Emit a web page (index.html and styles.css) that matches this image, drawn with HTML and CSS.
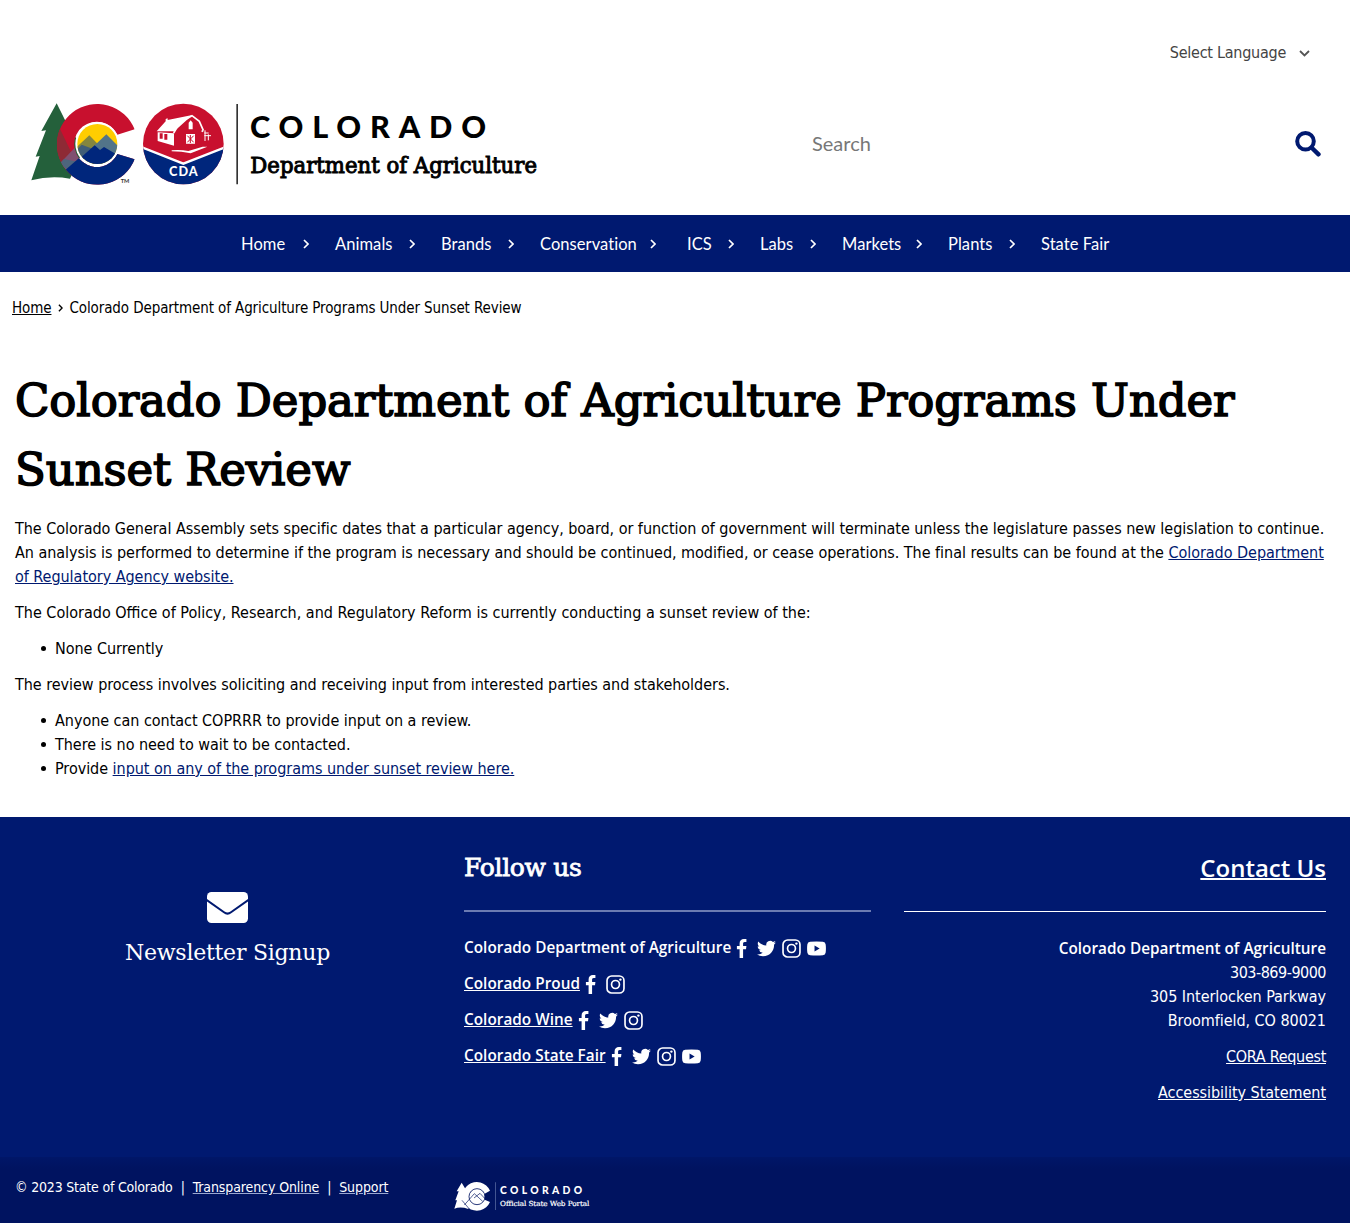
FILE: index.html
```html
<!DOCTYPE html>
<html lang="en">
<head>
<meta charset="utf-8">
<title>Colorado Department of Agriculture Programs Under Sunset Review</title>
<link rel="stylesheet" href="styles.css">
</head>
<body>
<svg class="defs" aria-hidden="true">
  <symbol id="fb" viewBox="0 0 24 24"><path d="M14 24V13h3.700l.5-4.300H14V6c0-1.200.4-2.100 2.100-2.100h2.100V.1C17.900.1 16.600 0 15 0c-3.200 0-5.400 2-5.400 5.600v3.100H6.200V13h3.400v11z"/></symbol>
  <symbol id="tw" viewBox="0 0 24 24"><path d="M23.950 4.570a10 10 0 0 1-2.820.770 4.960 4.960 0 0 0 2.160-2.720c-.950.550-2 .950-3.130 1.180a4.920 4.920 0 0 0-8.380 4.480C7.690 8.100 4.070 6.130 1.640 3.160a4.820 4.820 0 0 0-.670 2.480c0 1.710.87 3.210 2.190 4.100a4.900 4.900 0 0 1-2.230-.620v.060a4.920 4.920 0 0 0 3.950 4.830 5 5 0 0 1-2.210.080 4.940 4.940 0 0 0 4.600 3.420A9.870 9.870 0 0 1 0 19.540a13.990 13.990 0 0 0 7.550 2.210c9.050 0 14-7.500 14-13.980 0-.210 0-.420-.020-.630a9.940 9.940 0 0 0 2.420-2.570z"/></symbol>
  <symbol id="ig" viewBox="0 0 24 24"><rect x="1.300" y="1.300" width="21.400" height="21.400" rx="5.800" fill="none" stroke="#fff" stroke-width="2.100"/><circle cx="12" cy="12" r="5" fill="none" stroke="#fff" stroke-width="2.100"/><circle cx="18.200" cy="5.800" r="1.500"/></symbol>
  <symbol id="yt" viewBox="0 0 24 24"><path fill-rule="evenodd" d="M4 3.500Q12 3 20 3.500Q23.200 3.700 23.600 7Q24.200 12 23.600 17Q23.200 20.300 20 20.500Q12 21 4 20.500Q.8 20.300.4 17Q-.2 12 .4 7Q.8 3.700 4 3.500zM9.500 8.300v7.400L16 12z"/></symbol>
  <symbol id="chev" viewBox="0 0 6 10"><path d="M1 1l4 4-4 4" fill="none" stroke="currentColor" stroke-width="1.700"/></symbol>
</svg>

<header class="header">
  <div class="language">Select Language
    <svg width="11" height="7" viewBox="0 0 11 7"><path d="M1 1l4.500 4.500L10 1" fill="none" stroke="#555" stroke-width="1.800"/></svg>
  </div>
  <div class="masthead">
    <svg class="logo" width="530" height="105" viewBox="0 0 1590 315" role="img">
      <defs>
        <clipPath id="cshape"><path d="M344 118A121 121 0 1 0 344 208L292 192A68 68 0 1 1 292 134z"/></clipPath>
        <clipPath id="disc"><circle cx="232" cy="162" r="60"/></clipPath>
        <clipPath id="seal"><circle cx="490" cy="162" r="121"/></clipPath>
      </defs>
      <path fill="#24603b" d="M110 40L64 123L78 121L47 200L59 198L34 271Q92 255 150 266L190 180L135 90z"/>
      <g clip-path="url(#cshape)">
        <path fill="#c8102e" d="M100 30h260v260H100z"/>
        <path fill="#8e2a35" d="M90 40L112 100L160 200L100 240z"/>
        <path fill="#805070" d="M118 222L172 165L240 235L150 250z"/>
        <path fill="#4d657d" d="M118 222L132 207L175 216L142 238z"/>
        <path fill="#00267c" d="M136 240L222 165L350 180V300H190z"/>
      </g>
      <circle cx="232" cy="162" r="66" fill="#fff"/>
      <g clip-path="url(#disc)">
        <path fill="#ffcd00" d="M165 95h140v140H165z"/>
        <path fill="#84863f" d="M160 180L208 136L260 190V240H160z"/>
        <path fill="#527489" d="M215 175L259 133L310 184V210H215z"/>
        <path fill="#405d77" d="M160 190L185 164L222 178L180 210z"/>
        <path fill="#00267c" d="M150 232L224 166L240 180L252 171L310 205V240H150z"/>
      </g>
      <text x="302" y="280" class="mark" textLength="26" lengthAdjust="spacingAndGlyphs">TM</text>
      <g clip-path="url(#seal)">
        <path fill="#c8102e" d="M360 30h260v260H360z"/>
        <path fill="#00267c" d="M360 170L490 221L620 170V300H360z"/>
        <path fill="none" stroke="#fff" stroke-width="7" d="M360 170L490 221L620 170"/>
      </g>
      <path fill="#fff" d="M410 124L437 94V87L443 85V90L517 75L463 124z"/>
      <path fill="#fff" d="M413 127L462 130V167L413 153z"/>
      <path fill="none" stroke="#fff" stroke-width="5" d="M461 129L479 98L516 77L538 94L550 121M550 121L545 125"/>
      <path fill="#c8102e" d="M419 130h9v16h-9zM433 132h9v17h-9z"/>
      <path fill="#fff" d="M506 98L512 91L518 98V118H506zM498 132h27v29h-27z"/>
      <path fill="none" stroke="#c8102e" stroke-width="3" d="M502 137l19 20M521 137l-19 20M511 135v24"/>
      <path fill="none" stroke="#fff" stroke-width="3" d="M555 121v32M565 133v18M553 137h20M553 129h13"/>
      <path fill="#fff" d="M455 181Q483 179 505 183L548 170L562 170L512 190Q485 184 455 184z"/>
      <text x="447" y="257" class="seal-text" textLength="86">CDA</text>
      <path fill="#333" d="M649 42h5v241h-5z"/>
      <text x="690" y="145" class="state" textLength="708">COLORADO</text>
      <text x="691" y="248" class="dept" textLength="860" lengthAdjust="spacingAndGlyphs">Department of Agriculture</text>
    </svg>
    <div class="search">
      <span>Search</span>
      <svg width="26" height="26" viewBox="0 0 26 26"><circle cx="10.500" cy="10.300" r="8.300" fill="none" stroke="#001970" stroke-width="4"/><path d="M17 17l6.500 6.300" stroke="#001970" stroke-width="4.400" stroke-linecap="round"/></svg>
    </div>
  </div>
</header>

<nav class="nav">
  <a>Home<svg><use href="#chev"/></svg></a>
  <a>Animals<svg><use href="#chev"/></svg></a>
  <a>Brands<svg><use href="#chev"/></svg></a>
  <a class="wide">Conservation<svg><use href="#chev"/></svg></a>
  <a>ICS<svg><use href="#chev"/></svg></a>
  <a>Labs<svg><use href="#chev"/></svg></a>
  <a>Markets<svg><use href="#chev"/></svg></a>
  <a>Plants<svg><use href="#chev"/></svg></a>
  <a>State Fair</a>
</nav>

<div class="breadcrumb"><a>Home</a><svg width="5" height="8" viewBox="0 0 6 10"><use href="#chev"/></svg><span>Colorado Department of Agriculture Programs Under Sunset Review</span></div>

<main class="content">
  <h1>Colorado Department of Agriculture Programs Under<br>Sunset Review</h1>
  <p>The Colorado General Assembly sets specific dates that a particular agency, board, or function of government will terminate unless the legislature passes new legislation to continue.<br>An analysis is performed to determine if the program is necessary and should be continued, modified, or cease operations. The final results can be found at the <a>Colorado Department<br>of Regulatory Agency website.</a></p>
  <p class="loose">The Colorado Office of Policy, Research, and Regulatory Reform is currently conducting a sunset review of the:</p>
  <ul><li>None Currently</li></ul>
  <p>The review process involves soliciting and receiving input from interested parties and stakeholders.</p>
  <ul>
    <li>Anyone can contact COPRRR to provide input on a review.</li>
    <li>There is no need to wait to be contacted.</li>
    <li>Provide <a>input on any of the programs under sunset review here.</a></li>
  </ul>
</main>

<footer class="footer">
  <section class="newsletter">
    <svg width="41" height="31" viewBox="0 0 41 31"><rect width="41" height="31" rx="4.500" fill="#fff"/><path d="M-1 7.500L17 20.300Q20.500 23 24 20.300L42 7.500" fill="none" stroke="#001970" stroke-width="2"/></svg>
    <div>Newsletter Signup</div>
  </section>
  <section class="follow">
    <h2>Follow us</h2>
    <div class="row"><b>Colorado Department of Agriculture</b><svg><use href="#fb"/></svg><svg><use href="#tw"/></svg><svg><use href="#ig"/></svg><svg><use href="#yt"/></svg></div>
    <div class="row"><a>Colorado Proud</a><svg><use href="#fb"/></svg><svg><use href="#ig"/></svg></div>
    <div class="row"><a>Colorado Wine</a><svg><use href="#fb"/></svg><svg><use href="#tw"/></svg><svg><use href="#ig"/></svg></div>
    <div class="row"><a>Colorado State Fair</a><svg><use href="#fb"/></svg><svg><use href="#tw"/></svg><svg><use href="#ig"/></svg><svg><use href="#yt"/></svg></div>
  </section>
  <section class="contact">
    <h2><a>Contact Us</a></h2>
    <p><b>Colorado Department of Agriculture</b><br><span class="phone">303-869-9000</span><br>305 Interlocken Parkway<br>Broomfield, CO 80021</p>
    <p><a class="tight">CORA Request</a></p>
    <p><a>Accessibility Statement</a></p>
  </section>
</footer>

<div class="legal">
  <div class="legal-links"><span>© 2023 State of Colorado</span><span>|</span><a>Transparency Online</a><span>|</span><a>Support</a></div>
  <svg width="140" height="32" viewBox="0 0 420 96" role="img">
    <path fill="#fff" d="M23 5L8 31h6L4 58h5L1 83Q20 76 43 84L58 50L38 30z"/>
    <path fill="#fff" d="M108 29A43 43 0 1 0 108 63L92 56V38z"/>
    <circle cx="69" cy="47" r="24" fill="none" stroke="#001360" stroke-width="2.500"/>
    <path fill="none" stroke="#001360" stroke-width="2" d="M31 72L61 38L86 61M60 51L78 37L92 52M24 58L46 84"/>
    <path fill="#6577ab" d="M124 4h2v83h-2z"/>
    <text x="138" y="38" class="portal-state" textLength="246">COLORADO</text>
    <text x="138" y="74" class="portal-name" textLength="268" lengthAdjust="spacingAndGlyphs">Official State Web Portal</text>
  </svg>
</div>
</body>
</html>
```
FILE: styles.css
```css
* { box-sizing: border-box; }
body {
  margin: 0;
  background: #fff;
  color: #000;
  font: 16px/24px "DejaVu Sans Condensed", "DejaVu Sans", sans-serif;
  font-stretch: condensed;
}
.defs { display: none; }
a { text-decoration: underline; text-underline-offset: 1px; }

.header { height: 215px; padding-top: 41px; }
.language {
  display: flex;
  justify-content: flex-end;
  align-items: center;
  gap: 13px;
  padding-right: 40px;
  color: #444;
  letter-spacing: -0.26px;
}
.masthead { display: flex; justify-content: space-between; padding: 25px 29px 0 20px; }
.logo { display: block; }
.search {
  display: flex;
  justify-content: space-between;
  align-items: center;
  width: 509px;
  height: 107px;
  color: #777;
  font: 20px/24px "Lato", sans-serif;
}
.search span { padding-bottom: 2px; }
.mark { font: bold 17px "Lato", sans-serif; fill: #333; }
.seal-text { font: 900 38px "Lato", sans-serif; fill: #fff; }
.state { font: 900 92px "Lato", sans-serif; }
.dept { font: 64px "DejaVu Serif", serif; stroke: #000; stroke-width: 2.8px; }

.nav {
  display: grid;
  grid-template-columns: 94px 106px 99px 147px 73px 82px 106px 93px 70px;
  align-items: center;
  height: 57px;
  padding-left: 241px;
  background: #001970;
  color: #fff;
  font: 16.5px/24px "Lato", sans-serif;
  letter-spacing: 0.06px;
}
.nav a { display: flex; align-items: center; justify-content: space-between; padding-right: 26px; text-decoration: none; white-space: nowrap; }
.nav a:last-child { padding: 0; }
.nav .wide { padding-right: 31px; }
.nav svg { width: 6px; height: 10px; margin-top: 1px; }

.breadcrumb {
  display: flex;
  align-items: center;
  height: 24px;
  margin: 24px 12px 0;
  font-size: 15px;
  letter-spacing: -0.1px;
}
.breadcrumb svg { margin: 0 6px 0 7px; }

.content { height: 497px; padding: 46px 15px 0; white-space: nowrap; letter-spacing: -0.032px; }
h1, h2 { -webkit-text-stroke: 1.6px currentColor; }
h1 {
  margin: 0 0 13px;
  font: 45px/69px "DejaVu Serif", serif;
  letter-spacing: -0.08px;
}
.content p, .content ul { margin: 0 0 12px; }
.content .loose { letter-spacing: 0; }
.content ul { padding-left: 40px; list-style: none; }
.content li::before {
  content: "";
  display: inline-block;
  width: 5px;
  height: 5px;
  margin: 0 9px 3px -14px;
  border-radius: 50%;
  background: #000;
}
.content a { color: #001970; }

.footer { display: flex; height: 340px; background: #001970; color: #fff; fill: #fff; }
.newsletter {
  width: 455px;
  padding-top: 75px;
  text-align: center;
  font: 22px/32px "DejaVu Serif", serif;
  letter-spacing: -0.25px;
}
.newsletter svg { display: block; margin: 0 auto 14px; }
.follow { width: 407px; margin-left: 9px; padding-top: 33px; }
.follow h2 {
  height: 62px;
  margin: 0 0 23px;
  border-bottom: 2px solid #6b7bb2;
  font: 25px/36px "DejaVu Serif", serif;
  letter-spacing: -0.3px;
  -webkit-text-stroke-width: 0.8px;
}
.row { display: flex; align-items: center; height: 24px; margin-bottom: 12px; }
.row b, .row a, .contact b { font: 600 15.3px/24px "Open Sans", sans-serif; letter-spacing: 0.03px; }
.row svg { width: 19px; height: 19px; margin: 2px 3px 0; }
.row svg:nth-child(2) { margin-left: 1px; }
.contact { width: 422px; margin-left: 33px; padding-top: 33px; text-align: right; letter-spacing: -0.04px; }
.contact h2 { height: 62px; margin: 0 0 24px; border-bottom: 1px solid #fff; font: 600 24px/36px "Open Sans", sans-serif; letter-spacing: 0; -webkit-text-stroke: 0; }
.contact p { margin: 0 0 12px; }
.phone { letter-spacing: -0.5px; }
.tight { letter-spacing: -0.3px; }

.legal {
  display: flex;
  height: 66px;
  padding: 18px 15px 0;
  background: linear-gradient(#001668, #001360 12px);
  color: #fff;
  font-size: 14px;
  letter-spacing: -0.2px;
}
.legal-links { display: flex; gap: 8px; width: 439px; }
.legal-links a { letter-spacing: -0.1px; text-decoration-color: #9aa7d0; }
.legal svg { margin-top: 6px; }
.portal-state { font: 900 31px "Lato", sans-serif; fill: #fff; }
.portal-name { font: 21px "DejaVu Serif", serif; fill: #fff; stroke: #fff; stroke-width: 0.6px; }
```
